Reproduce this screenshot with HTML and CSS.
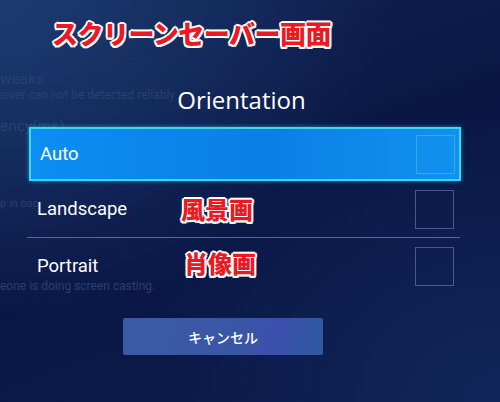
FILE: index.html
```html
<!DOCTYPE html>
<html lang="ja">
<head>
  <meta charset="UTF-8" />
  <title>Orientation</title>
  <link rel="stylesheet" href="styles.css">
</head>
<body>
  <div class="screen">
    <div class="settings">
      <div class="settings-line"></div>
      <p class="setting-title t1">weaks</p>
      <p class="setting-sub t2">eiver can not be detected reliably</p>
      <p class="setting-title t3">ency(ms)</p>
      <p class="setting-sub t4">p in bac</p>
      <p class="setting-sub t5">eone is doing screen casting.</p>
    </div>

    <div class="dialog">
      <h1 class="dialog-title">Orientation</h1>
      <div class="option selected">
        <span>Auto</span>
        <div class="check"></div>
      </div>
      <div class="option">
        <span>Landscape</span>
        <div class="check"></div>
      </div>
      <div class="divider"></div>
      <div class="option">
        <span>Portrait</span>
        <div class="check"></div>
      </div>
      <button class="cancel">キャンセル</button>
    </div>

    <div class="note note-main">スクリーンセーバー画面</div>
    <div class="note note-land">風景画</div>
    <div class="note note-port">肖像画</div>
  </div>
</body>
</html>
```

FILE: styles.css
```css
body {
  margin: 0;
  font-family: Roboto, "Noto Sans CJK JP", sans-serif;
  background: #08143f;
}

.screen {
  position: relative;
  width: 500px;
  height: 402px;
  overflow: hidden;
  background:
    radial-gradient(ellipse at 0% 0%, #1c3a70 0%, rgba(28,58,112,0) 55%),
    radial-gradient(ellipse at 100% 100%, #10265a 0%, rgba(16,38,90,0) 50%),
    linear-gradient(160deg, #102554 0%, #0a1745 45%, #0b1a4a 100%);
}

/* faded settings list behind the dialog */
.settings {
  padding-top: 58px;
  color: #2c3f70;
}

.settings-line {
  width: 135px;
  height: 1px;
  background: #1f3060;
}

.settings p {
  margin: 0;
  white-space: nowrap;
}

.setting-title {
  font-size: 15.5px;
}

.setting-sub {
  font-size: 12px;
}

.t1 { margin-top: 11px !important; }
.t2 { margin-top: 0 !important; }
.t3 { margin-top: 15px !important; }
.t4 { margin-top: 62px !important; font-size: 11px; }
.t5 { margin-top: 69px !important; }

.dialog {
  position: absolute;
  left: 27px;
  top: 84px;
  width: 433px;
  color: #fff;
}

.dialog-title {
  margin: 0 0 12px -4px;
  text-align: center;
  font-family: "Open Sans", Roboto, sans-serif;
  font-size: 24px;
  font-weight: 400;
  line-height: 31px;
}

.option {
  display: flex;
  align-items: center;
  justify-content: space-between;
  height: 56px;
  padding: 0 6px 0 10px;
  font-size: 18.5px;
}

.option.selected {
  height: 50px;
  margin-left: 2px;
  margin-right: -1px;
  padding-left: 9px;
  padding-right: 4px;
  border: 2px solid #3ad8f4;
  background: linear-gradient(90deg, #0c8ef2 0%, #0a7fe6 55%, #1192ee 100%);
  box-shadow: 0 0 4px rgba(58,216,244,0.6);
}

.check {
  width: 37px;
  height: 37px;
  border: 1px solid #4b5889;
}

.selected .check {
  border-color: #3aa6ee;
}

.divider {
  height: 1px;
  background: #56679c;
}

.cancel {
  display: block;
  width: 200px;
  height: 37px;
  margin: 24px 0 0 96px;
  border: none;
  border-radius: 2px;
  background: linear-gradient(100deg, #3a5aa6 0%, #3956a6 60%, #3d4fae 75%, #2f5aa0 100%);
  color: #fff;
  font-family: "Noto Sans CJK JP", sans-serif;
  font-size: 14px;
  font-weight: 500;
}

/* red annotations on top of the photo */
.note {
  position: absolute;
  font-family: "Noto Sans CJK JP", sans-serif;
  font-weight: 900;
  color: #ee1822;
  white-space: nowrap;
  text-shadow:
    -2px 0 #fff, 2px 0 #fff, 0 -2px #fff, 0 2px #fff,
    -1.5px -1.5px #fff, 1.5px -1.5px #fff, -1.5px 1.5px #fff, 1.5px 1.5px #fff;
}

.note-main {
  left: 52px;
  top: 14px;
  font-size: 26px;
  letter-spacing: -0.5px;
}

.note-land {
  left: 181px;
  top: 191px;
  font-size: 24px;
}

.note-port {
  left: 184px;
  top: 245px;
  font-size: 24px;
}
```
